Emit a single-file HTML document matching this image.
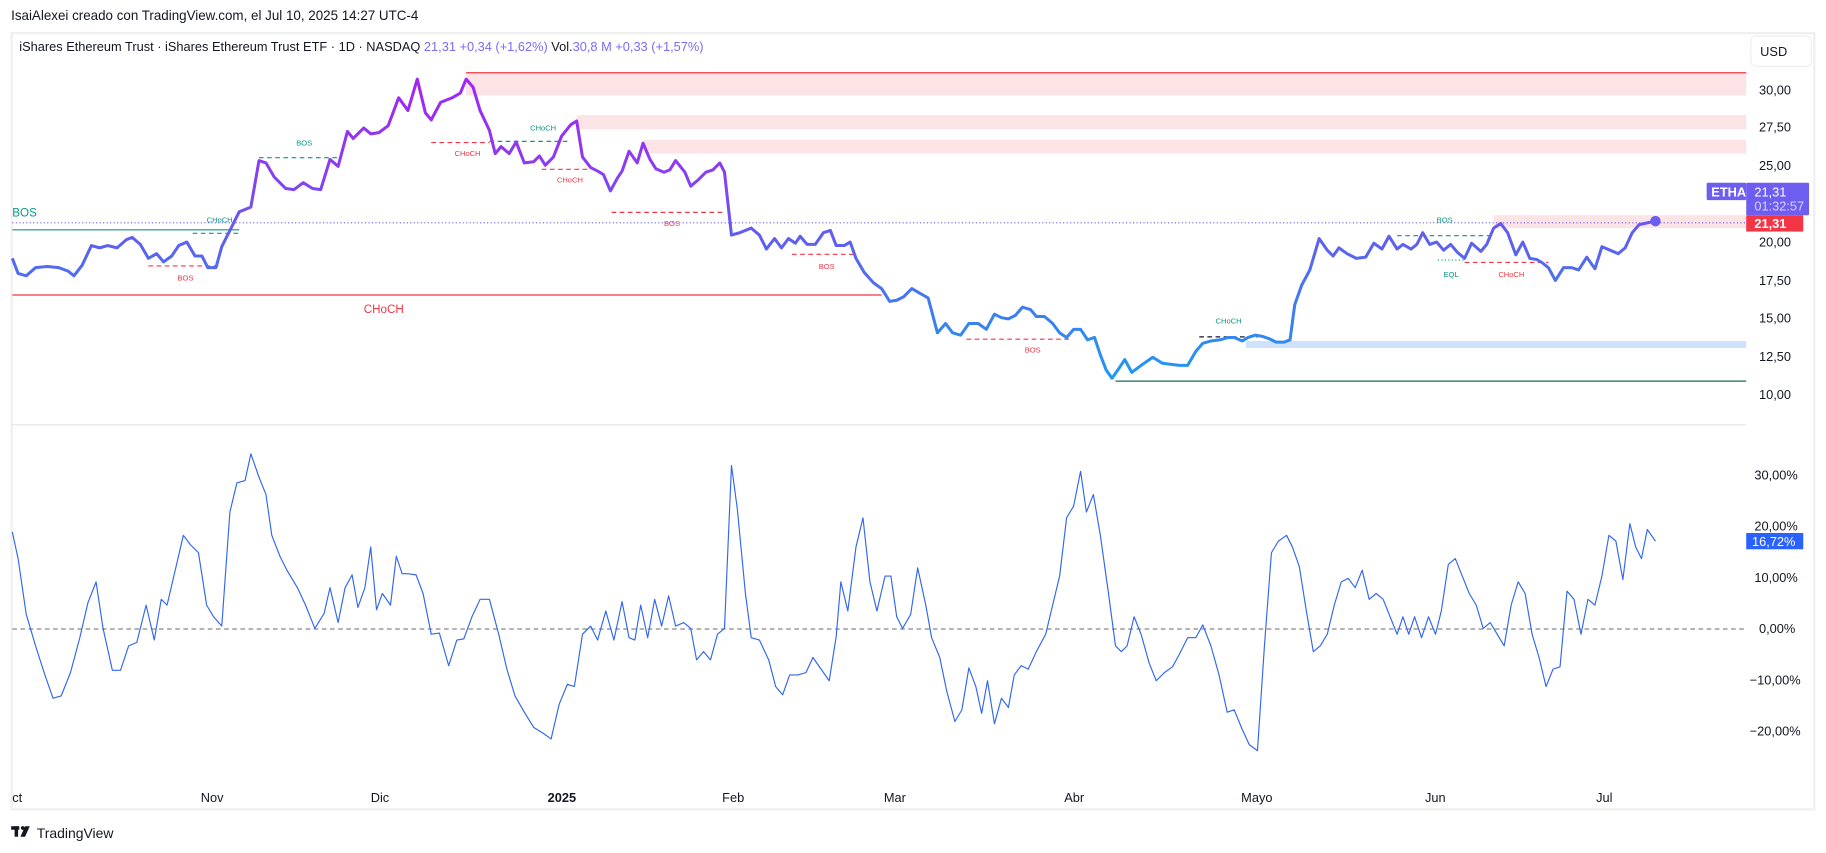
<!DOCTYPE html>
<html><head><meta charset="utf-8"><style>
html,body{margin:0;padding:0;background:#fff;width:1826px;height:853px;overflow:hidden}
svg{display:block}
text{font-family:"Liberation Sans",sans-serif}
</style></head><body>
<svg width="1826" height="853" viewBox="0 0 1568 733" xmlns="http://www.w3.org/2000/svg">
<defs>
<linearGradient id="pg" gradientUnits="userSpaceOnUse" x1="0" y1="65" x2="0" y2="325">
<stop offset="0" stop-color="#a324f2"/><stop offset="0.3" stop-color="#8c3cf0"/><stop offset="0.55" stop-color="#5e60ef"/><stop offset="1" stop-color="#1e9af0"/>
</linearGradient>
</defs>
<rect width="1568" height="733" fill="#fff"/>
<text x="9" y="17" font-size="11.5" fill="#131722">IsaiAlexei creado con TradingView.com, el Jul 10, 2025 14:27 UTC-4</text>
<rect x="9.5" y="28.5" width="1549" height="667" fill="#fff" stroke="#f0f0f0" stroke-width="2"/>
<text x="16" y="44" font-size="11" fill="#131722">iShares Ethereum Trust · iShares Ethereum Trust ETF · 1D · NASDAQ <tspan fill="#7b6cf0">21,31  +0,34 (+1,62%)</tspan>  Vol.<tspan fill="#7b6cf0">30,8 M  +0,33 (+1,57%)</tspan></text>
<rect x="1504" y="31" width="52" height="26" rx="4" fill="#fff" stroke="#eee"/>
<text x="1512" y="48" font-size="11" fill="#131722">USD</text>
<line x1="9" y1="365" x2="1500" y2="365" stroke="#e8e8e8"/>
<!-- zones -->
<rect x="400" y="62" width="1100" height="20" fill="#fce3e5"/><line x1="400" y1="62.5" x2="1500" y2="62.5" stroke="#f23645"/>
<rect x="495" y="99" width="1005" height="12" fill="#fce3e5"/>
<rect x="553" y="120" width="947" height="12" fill="#fce3e5"/>
<rect x="1283" y="185" width="217" height="11" fill="#fce3e5"/>
<rect x="1070" y="293" width="430" height="6" fill="#cfe2fb"/>
<line x1="958" y1="327.5" x2="1500" y2="327.5" stroke="#1b6a50"/>
<line x1="10" y1="253.5" x2="757" y2="253.5" stroke="#f23645"/>
<line x1="10" y1="197.5" x2="205" y2="197.5" stroke="#089981"/>
<line x1="10" y1="191.5" x2="1500" y2="191.5" stroke="#6e5ef0" stroke-dasharray="1 2"/>
<g font-size="10" fill="#f23645"><text x="312" y="269">CHoCH</text></g>
<text x="10" y="186" font-size="10" fill="#089981">BOS</text>
<g stroke-dasharray="4 3" stroke-width="1">
<line x1="165" y1="200.5" x2="205" y2="200.5" stroke="#089981"/>
<line x1="127" y1="228.5" x2="190" y2="228.5" stroke="#f23645"/>
<line x1="222" y1="135.5" x2="290" y2="135.5" stroke="#089981"/>
<line x1="370" y1="122.5" x2="420" y2="122.5" stroke="#f23645"/>
<line x1="420" y1="121.5" x2="490" y2="121.5" stroke="#089981"/>
<line x1="465" y1="145.5" x2="505" y2="145.5" stroke="#f23645"/>
<line x1="525" y1="182.5" x2="620" y2="182.5" stroke="#f23645"/>
<line x1="680" y1="218.5" x2="735" y2="218.5" stroke="#f23645"/>
<line x1="830" y1="291.5" x2="920" y2="291.5" stroke="#f23645"/>
<line x1="1030" y1="289.5" x2="1080" y2="289.5" stroke="#131722"/>
<line x1="1200" y1="202.5" x2="1283" y2="202.5" stroke="#089981"/>
<line x1="1258" y1="225.5" x2="1330" y2="225.5" stroke="#f23645"/>
</g>
<line x1="1235" y1="223.5" x2="1258" y2="223.5" stroke="#089981" stroke-dasharray="1 2"/>
<g font-size="6.5">
<text x="177" y="191" fill="#089981">CHoCH</text>
<text x="152" y="241" fill="#f23645">BOS</text>
<text x="254" y="125" fill="#089981">BOS</text>
<text x="390" y="134" fill="#f23645">CHoCH</text>
<text x="455" y="112" fill="#089981">CHoCH</text>
<text x="478" y="157" fill="#f23645">CHoCH</text>
<text x="570" y="194" fill="#f23645">BOS</text>
<text x="703" y="231" fill="#f23645">BOS</text>
<text x="880" y="303" fill="#f23645">BOS</text>
<text x="1044" y="278" fill="#089981">CHoCH</text>
<text x="1234" y="191" fill="#089981">BOS</text>
<text x="1240" y="238" fill="#089981">EQL</text>
<text x="1287" y="238" fill="#f23645">CHoCH</text>
</g>
<polyline fill="none" stroke="url(#pg)" stroke-width="2.6" stroke-linejoin="round" points="10,222 15,235 22,237 30,230 40,229 50,230 58,233 63,237 70,228 78,211 85,213 92,211 100,213 108,206 113,204 120,210 127,222 134,218 140,225 147,220 153,211 160,208 167,220 173,220 178,230 185,230 190,212 197,198 205,182 215,178 222,138 228,140 235,152 245,162 252,163 260,157 268,162 275,163 283,137 290,143 298,113 303,119 312,110 318,115 325,114 333,108 342,84 350,95 358,68 365,97 370,103 378,88 388,84 395,80 400,68 406,75 412,95 420,112 425,132 430,126 437,132 443,122 450,140 458,139 463,134 468,142 475,135 482,117 490,107 495,104 500,135 507,144 513,147 518,150 524,164 530,153 534,147 540,130 547,140 552,123 558,137 563,145 570,148 575,146 580,138 588,148 593,160 600,154 606,148 612,146 618,140 622,148 628,202 635,200 645,196 652,202 658,214 665,205 671,213 677,205 683,209 687,203 693,210 700,210 707,200 713,198 718,211 725,211 730,208 735,222 742,234 750,243 757,248 764,259 770,258 776,255 783,248 790,252 797,256 805,286 812,278 818,286 825,288 832,278 840,278 847,283 854,270 860,273 866,274 872,271 878,264 885,266 890,272 897,272 904,278 910,286 916,290 922,283 928,283 934,292 940,290 945,305 950,318 955,325 960,318 966,309 972,320 980,314 990,307 998,312 1005,313 1013,314 1020,314 1027,302 1033,295 1040,293 1048,292 1055,290 1060,290 1067,293 1072,290 1078,288 1084,289 1090,291 1096,294 1103,294 1108,292 1112,262 1118,245 1125,232 1133,205 1140,215 1145,220 1150,213 1157,218 1165,222 1173,221 1180,209 1187,214 1193,203 1200,214 1205,210 1212,214 1217,210 1222,200 1228,210 1234,208 1240,215 1246,210 1252,217 1258,222 1264,209 1272,216 1277,210 1283,196 1289,192 1295,200 1302,219 1308,208 1314,222 1320,223 1325,226 1330,230 1336,241 1343,230 1350,230 1356,232 1363,221 1370,231 1376,212 1383,215 1390,218 1396,213 1402,200 1408,193 1422,190"/>
<circle cx="1422" cy="190" r="4.5" fill="#6e5ef0"/>
<!-- price axis -->
<g font-size="11" fill="#131722">
<text x="1511" y="81">30,00</text><text x="1511" y="113">27,50</text><text x="1511" y="146">25,00</text>
<text x="1511" y="212">20,00</text><text x="1511" y="245">17,50</text><text x="1511" y="277">15,00</text>
<text x="1511" y="310">12,50</text><text x="1511" y="343">10,00</text>
<text x="1507" y="412">30,00%</text><text x="1507" y="456">20,00%</text><text x="1507" y="500">10,00%</text>
<text x="1511" y="544">0,00%</text><text x="1503" y="588">−10,00%</text><text x="1503" y="632">−20,00%</text>
</g>
<rect x="1466" y="157" width="34" height="15" rx="1" fill="#6e5ef0"/>
<text x="1470" y="169" font-size="11" font-weight="bold" fill="#fff">ETHA</text>
<rect x="1500" y="157" width="54" height="28" rx="1" fill="#6e5ef0"/>
<text x="1507" y="169" font-size="11" fill="#fff">21,31</text>
<text x="1507" y="181" font-size="11" fill="#d8d2ff">01:32:57</text>
<rect x="1500" y="185" width="49" height="14" fill="#f23645"/>
<text x="1507" y="196" font-size="11" font-weight="bold" fill="#fff">21,31</text>
<!-- oscillator -->
<line x1="10" y1="540.5" x2="1500" y2="540.5" stroke="#888" stroke-dasharray="4 3"/>
<polyline fill="none" stroke="#3367f0" stroke-width="1" stroke-linejoin="round" points="10,457 15,480 22,528 30,555 38,580 45,600 52,598 60,578 68,548 75,518 82,500 88,540 96,576 103,576 110,555 117,552 125,520 132,550 138,515 143,520 150,490 157,460 163,468 170,475 177,520 183,530 190,538 197,440 203,415 210,413 215,390 222,410 228,425 233,460 240,478 246,490 255,505 262,520 270,540 278,527 283,505 290,535 296,505 302,494 307,522 313,505 318,470 323,524 328,510 335,520 340,478 345,493 350,493 357,494 363,510 370,545 377,544 385,572 392,550 398,549 405,530 412,515 420,515 428,545 435,575 442,598 450,612 458,625 466,630 473,635 480,605 487,588 493,590 500,545 507,538 513,550 520,525 527,550 534,517 540,548 545,550 550,520 556,548 562,515 568,538 574,512 580,538 587,535 593,540 598,567 604,560 610,567 616,545 622,540 628,400 633,437 640,510 645,548 652,550 660,567 666,590 672,597 678,580 685,580 692,578 698,565 705,575 712,585 718,547 722,500 728,525 735,470 741,445 747,500 753,525 760,495 765,495 770,530 775,540 782,528 788,488 795,520 800,548 807,565 813,594 820,620 826,610 832,574 838,590 843,613 848,585 854,622 860,600 866,608 871,580 877,572 883,575 890,560 898,545 904,520 910,495 916,445 922,435 928,405 933,440 939,425 945,460 952,510 958,555 963,560 968,555 974,530 980,545 987,570 993,585 1000,578 1007,573 1013,562 1020,548 1027,548 1033,537 1040,555 1047,580 1054,612 1060,610 1067,627 1073,640 1080,645 1086,555 1092,475 1098,465 1105,460 1110,470 1116,487 1122,525 1128,560 1134,555 1140,545 1146,520 1152,500 1158,497 1164,505 1170,490 1176,515 1182,510 1188,515 1194,530 1200,545 1205,530 1210,545 1215,530 1221,548 1227,530 1233,545 1238,525 1244,485 1250,480 1256,495 1262,510 1268,520 1274,540 1280,535 1286,545 1292,555 1298,520 1304,500 1310,510 1316,545 1322,565 1328,590 1334,575 1340,573 1346,508 1352,515 1358,545 1364,515 1370,520 1376,495 1382,460 1388,465 1394,498 1400,450 1405,470 1410,480 1415,455 1422,465"/>
<rect x="1500" y="458" width="49" height="14" fill="#2962ff"/>
<text x="1505" y="469" font-size="11" fill="#fff">16,72%</text>
<!-- time axis -->
<g font-size="11" fill="#131722">
<text x="10" y="689">ct</text><text x="172" y="689">Nov</text><text x="318" y="689">Dic</text>
<text x="470" y="689" font-weight="bold">2025</text><text x="620" y="689">Feb</text><text x="759" y="689">Mar</text>
<text x="914" y="689">Abr</text><text x="1066" y="689">Mayo</text><text x="1224" y="689">Jun</text><text x="1371" y="689">Jul</text>
</g>
<!-- footer logo -->
<g fill="#131722">
<rect x="9" y="710" width="7" height="3"/><rect x="12" y="710" width="3" height="9"/>
<circle cx="19" cy="711.5" r="1.6"/>
<path d="M21 710 L25 710 L21 719 L17 719 Z"/>
</g>
<text x="31" y="720" font-size="12" fill="#131722">TradingView</text>
</svg>
</body></html>
